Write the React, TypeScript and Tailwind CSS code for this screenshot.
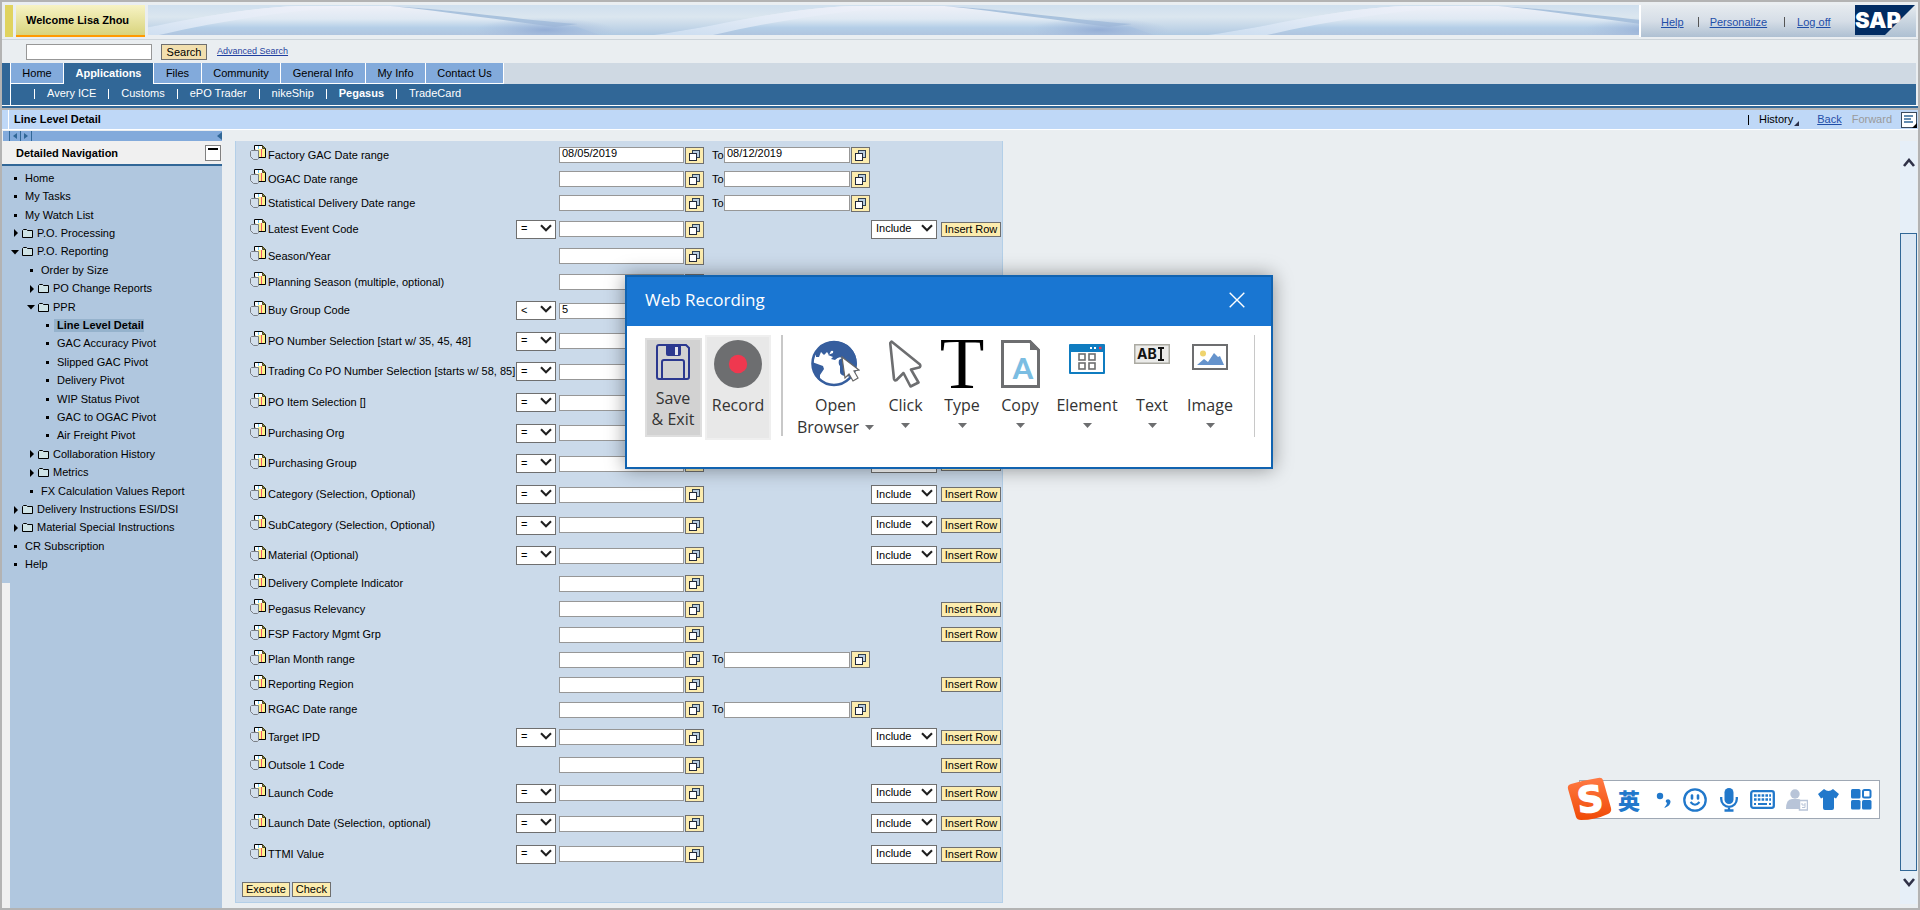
import React from "react";

type Row = {
  label: string;
  height: string;
  op?: string;
  value?: string;
  to?: string;
  include?: boolean;
  insert?: boolean;
};

const H24 = "h-6";
const H25 = "h-[25px]";
const H26 = "h-[26px]";
const H28 = "h-7";
const H30 = "h-[30px]";
const H31 = "h-[31px]";

const rows: Row[] = [
  { label: "Factory GAC Date range", height: H24, value: "08/05/2019", to: "08/12/2019" },
  { label: "OGAC Date range", height: H24, to: "" },
  { label: "Statistical Delivery Date range", height: H24, to: "" },
  { label: "Latest Event Code", height: H28, op: "=", include: true, insert: true },
  { label: "Season/Year", height: H26 },
  { label: "Planning Season (multiple, optional)", height: H26 },
  { label: "Buy Group Code", height: H31, op: "<", value: "5", include: true, insert: true },
  { label: "PO Number Selection [start w/ 35, 45, 48]", height: H30, op: "=", include: true, insert: true },
  { label: "Trading Co PO Number Selection [starts w/ 58, 85]", height: H31, op: "=", include: true, insert: true },
  { label: "PO Item Selection []", height: H31, op: "=", include: true, insert: true },
  { label: "Purchasing Org", height: H30, op: "=", include: true, insert: true },
  { label: "Purchasing Group", height: H31, op: "=", include: true, insert: true },
  { label: "Category (Selection, Optional)", height: H31, op: "=", include: true, insert: true },
  { label: "SubCategory (Selection, Optional)", height: H30, op: "=", include: true, insert: true },
  { label: "Material (Optional)", height: H31, op: "=", include: true, insert: true },
  { label: "Delivery Complete Indicator", height: H25 },
  { label: "Pegasus Relevancy", height: H26, insert: true },
  { label: "FSP Factory Mgmt Grp", height: H25, insert: true },
  { label: "Plan Month range", height: H25, to: "" },
  { label: "Reporting Region", height: H25, insert: true },
  { label: "RGAC Date range", height: H25, to: "" },
  { label: "Target IPD", height: H30, op: "=", include: true, insert: true },
  { label: "Outsole 1 Code", height: H26, insert: true },
  { label: "Launch Code", height: H30, op: "=", include: true, insert: true },
  { label: "Launch Date (Selection, optional)", height: H31, op: "=", include: true, insert: true },
  { label: "TTMI Value", height: H30, op: "=", include: true, insert: true },
];

type Node = { label: string; level: 0 | 1 | 2; kind: "leaf" | "closed" | "open"; current?: boolean };

const nodes: Node[] = [
  { label: "Home", level: 0, kind: "leaf" },
  { label: "My Tasks", level: 0, kind: "leaf" },
  { label: "My Watch List", level: 0, kind: "leaf" },
  { label: "P.O. Processing", level: 0, kind: "closed" },
  { label: "P.O. Reporting", level: 0, kind: "open" },
  { label: "Order by Size", level: 1, kind: "leaf" },
  { label: "PO Change Reports", level: 1, kind: "closed" },
  { label: "PPR", level: 1, kind: "open" },
  { label: "Line Level Detail", level: 2, kind: "leaf", current: true },
  { label: "GAC Accuracy Pivot", level: 2, kind: "leaf" },
  { label: "Slipped GAC Pivot", level: 2, kind: "leaf" },
  { label: "Delivery Pivot", level: 2, kind: "leaf" },
  { label: "WIP Status Pivot", level: 2, kind: "leaf" },
  { label: "GAC to OGAC Pivot", level: 2, kind: "leaf" },
  { label: "Air Freight Pivot", level: 2, kind: "leaf" },
  { label: "Collaboration History", level: 1, kind: "closed" },
  { label: "Metrics", level: 1, kind: "closed" },
  { label: "FX Calculation Values Report", level: 1, kind: "leaf" },
  { label: "Delivery Instructions ESI/DSI", level: 0, kind: "closed" },
  { label: "Material Special Instructions", level: 0, kind: "closed" },
  { label: "CR Subscription", level: 0, kind: "leaf" },
  { label: "Help", level: 0, kind: "leaf" },
];

const levelPad = ["pl-[9px]", "pl-[25px]", "pl-[41px]"];

function Banner() {
  return (
    <svg className="h-full w-full" aria-hidden="true">
      <defs>
        <linearGradient id="sky" x1="0" y1="0" x2="0" y2="1">
          <stop offset="0" stopColor="#cfdfee" />
          <stop offset="0.4" stopColor="#dbe6ef" />
          <stop offset="1" stopColor="#b0c9e2" />
        </linearGradient>
        <linearGradient id="hill" x1="0" y1="0" x2="0" y2="1">
          <stop offset="0" stopColor="#eef0f8" />
          <stop offset="0.45" stopColor="#dfe9f3" />
          <stop offset="0.75" stopColor="#b4cee7" />
          <stop offset="1" stopColor="#b0c5df" />
        </linearGradient>
        <linearGradient id="band" x1="0" y1="1" x2="1" y2="0">
          <stop offset="0" stopColor="#cbddf0" />
          <stop offset="0.5" stopColor="#e3ebf6" />
          <stop offset="1" stopColor="#f0f1f9" />
        </linearGradient>
        <radialGradient id="shade">
          <stop offset="0" stopColor="#8fa9d3" stopOpacity="0.85" />
          <stop offset="1" stopColor="#a5bbdc" stopOpacity="0" />
        </radialGradient>
        <pattern id="wave" x="-48" y="0" width="554" height="30" patternUnits="userSpaceOnUse">
          <rect width="554" height="30" fill="url(#sky)" />
          <path d="M0 30 C60 22 130 3 200 1 H290 C360 5 420 16 475 21 L500 30 Z" fill="url(#hill)" />
          <path d="M0 30 C60 22 130 3 200 1 H270 C200 3 120 16 59 30 Z" fill="url(#band)" />
          <path d="M290 1 C350 4 420 15 478 19 L455 22 C400 15 350 7 290 1Z" fill="#a9c2dd" />
          <ellipse cx="445" cy="25" rx="70" ry="12" fill="url(#shade)" />
        </pattern>
      </defs>
      <rect width="100%" height="100%" fill="url(#wave)" />
    </svg>
  );
}

function DocIcon() {
  return (
    <svg width="17" height="16" viewBox="0 0 17 16" aria-hidden="true" className="mb-1 shrink-0">
      <path d="M4.500 4V.5H12.500L15.500 3.500V12.500H8Z" fill="#fff" stroke="#000" />
      <path d="M8 4H15V12H8Z" fill="#fdf28c" />
      <path d="M12.500 .5V3.500H15.500Z" fill="#8a8440" stroke="#4a4620" />
      <path d="M8.500 1V4" stroke="#6cc7f2" />
      <path d="M11.500 4V12" stroke="#f0566a" />
      <path d="M1.500 5.500H8.500V13.500L7.500 14.500H3.500L.5 11.500V6.500Z" fill="#d3dfec" stroke="#7a7f86" />
    </svg>
  );
}

function PickButton({ label }: { label: string }) {
  return (
    <button type="button" aria-label={label} className="grid h-[17px] w-[19px] shrink-0 place-items-center border border-[#6f6f6f] bg-[#fcecae]">
      <svg width="11" height="13" viewBox="0 0 11 13" aria-hidden="true">
        <rect x="3.500" y="1.500" width="7" height="7" fill="#b9cde0" stroke="#33414f" />
        <rect x=".5" y="4.500" width="7" height="7" fill="#fff" stroke="#222838" />
      </svg>
    </button>
  );
}

function Choice({ value, options, label, width }: { value: string; options: string[]; label: string; width: string }) {
  return (
    <span className={"relative flex h-[19px] " + width}>
      <select aria-label={label} defaultValue={value} className="h-full w-full appearance-none border border-[#6f6f6f] bg-white pb-px pl-1 text-[11px]">
        {options.map((o) => (
          <option key={o}>{o}</option>
        ))}
      </select>
      <svg width="12" height="8" viewBox="0 0 12 8" aria-hidden="true" className="pointer-events-none absolute right-1 top-1">
        <path d="M1 1.200L6 6.200L11 1.200" fill="none" stroke="#1f1f1f" strokeWidth="2.100" />
      </svg>
    </span>
  );
}

function YellowButton({ children, className }: { children: React.ReactNode; className?: string }) {
  return (
    <button type="button" className={"h-[15px] whitespace-nowrap border border-[#6f6f6f] bg-[#fcecae] text-center text-[11px] leading-[13px] " + (className ?? "px-[3px]")}>
      {children}
    </button>
  );
}

function FieldRow({ row, index }: { row: Row; index: number }) {
  const id = "field-" + index;
  return (
    <div className={"grid grid-cols-[266px_43px_153px_159px_70px_60px] items-center pl-[14px] " + row.height}>
      <div className="flex items-center gap-px whitespace-nowrap">
        <DocIcon />
        <label htmlFor={id}>{row.label}</label>
      </div>
      <div>{row.op && <Choice label={row.label + " operator"} value={row.op} options={["=", "<", ">"]} width="w-10" />}</div>
      <div className="flex items-center gap-px">
        <input id={id} defaultValue={row.value} className="h-4 w-[125px] border border-[#979797] bg-white px-0.5 pb-1 text-[11px]" />
        <PickButton label={"Pick " + row.label} />
      </div>
      <div className="flex items-center">
        {row.to !== undefined && (
          <>
            <label htmlFor={id + "-to"} className="w-3">To</label>
            <input id={id + "-to"} defaultValue={row.to} className="mr-px h-4 w-[126px] border border-[#979797] bg-white px-0.5 pb-1 text-[11px]" />
            <PickButton label={"Pick end of " + row.label} />
          </>
        )}
      </div>
      <div>{row.include && <Choice label={row.label + " mode"} value="Include" options={["Include", "Exclude"]} width="w-[66px]" />}</div>
      {row.insert && <YellowButton className="w-[60px]">Insert Row</YellowButton>}
    </div>
  );
}

function Marker({ kind }: { kind: Node["kind"] }) {
  if (kind === "leaf") return <span className="ml-[3px] mr-2 h-[3px] w-[3px] bg-black" />;
  return (
    <span className="flex items-center gap-[3px]">
      <svg width="8" height="8" viewBox="0 0 8 8" aria-hidden="true">
        {kind === "closed" ? <path d="M3 0L7 4L3 8Z" /> : <path d="M0 2H8L4 6.500Z" />}
      </svg>
      <svg width="11" height="9" viewBox="0 0 11 9" aria-hidden="true" className="mr-1">
        <path d="M.5 8.500V1.500L1.500 .5H4.500L5.500 1.500H10.500V8.500Z" fill="#cfe3e6" stroke="#000" />
      </svg>
    </span>
  );
}

function Sidebar() {
  return (
    <aside className="flex w-[220px] shrink-0 flex-col">
      <div className="ml-px flex h-[10px] items-center bg-[#82aadb] pl-[6px]">
        <span className="flex h-full items-center border-l border-[#316797] px-[3px]">
          <svg width="4" height="6" viewBox="0 0 4 6" aria-hidden="true"><path d="M4 0V6L0 3Z" fill="#316797" /></svg>
        </span>
        <span className="flex h-full items-center border-x border-[#316797] px-[3px]">
          <svg width="4" height="6" viewBox="0 0 4 6" aria-hidden="true"><path d="M0 0V6L4 3Z" fill="#316797" /></svg>
        </span>
        <svg width="5" height="8" viewBox="0 0 5 8" aria-hidden="true" className="ml-auto"><path d="M5 0V8L0 4Z" fill="#316797" /></svg>
      </div>
      <div className="flex h-[25px] items-center justify-between border-b-2 border-[#316797] bg-[#f0f0f0] pl-[14px] pr-px">
        <h2 className="pt-px font-bold">Detailed Navigation</h2>
        <button type="button" aria-label="Collapse" className="flex h-4 w-4 items-start border border-[#808080] bg-white px-[2px] pt-[2px]">
          <span className="h-[2px] w-full bg-black" />
        </button>
      </div>
      <div className="flex flex-1 flex-col bg-[#b0c7df]">
        <ul className="flex h-[409px] flex-col pb-px pt-[3px]">
          {nodes.map((n) => (
            <li key={n.label} className={"flex flex-1 items-center " + levelPad[n.level]}>
              <Marker kind={n.kind} />
              <a href="#" className={n.current ? "-ml-[3px] bg-[#95b2cc] pl-[3px] font-bold leading-[13px]" : "leading-[13px]"}>
                {n.label}
              </a>
            </li>
          ))}
        </ul>
        <div className="mt-2 w-2 flex-1 bg-[#f0f0f0]" />
      </div>
    </aside>
  );
}

function Caret() {
  return (
    <svg width="9" height="5" viewBox="0 0 9 5" aria-hidden="true"><path d="M0 0H9L4.500 5Z" fill="#6d6e70" /></svg>
  );
}

function Tool({ label, width, children }: { label: string; width: string; children: React.ReactNode }) {
  return (
    <button type="button" className={"flex flex-col items-center pt-[5px] " + width}>
      <span className="flex h-[54px] justify-center">{children}</span>
      <span className="leading-[22px]">{label}</span>
      <span className="mt-[7px]"><Caret /></span>
    </button>
  );
}

function WebRecording() {
  return (
    <section role="dialog" aria-label="Web Recording" className="absolute left-[623px] top-[273px] z-10 h-[194px] w-[648px] border-2 border-[#1163b0] bg-white font-['Open_Sans','Noto_Sans',sans-serif] text-base text-[#333] shadow-[0_0_18px_rgba(0,0,0,0.4)]">
      <header className="flex h-[49px] items-center justify-between bg-[#1976d2] pb-[3px] pl-[18px] pr-[26px] text-white">
        <h2 className="text-[17px]">Web Recording</h2>
        <button type="button" aria-label="Close">
          <svg width="16" height="16" viewBox="0 0 16 16" aria-hidden="true"><path d="M.7 .7L15.300 15.300M15.300 .7L.7 15.300" stroke="#fff" strokeWidth="1.400" /></svg>
        </button>
      </header>
      <div className="flex pl-[18px] pt-[9px]">
        <button type="button" className="mr-[3px] mt-[3px] flex h-[99px] w-[57px] flex-col items-center border-2 border-[#dedede] bg-[#d2d2d2] pr-px pt-1 leading-[21px]">
          <svg width="34" height="36" viewBox="0 0 34 36" aria-hidden="true" className="mb-2 shrink-0">
            <path d="M3 1H30L33 4V33Q33 35 31 35H3Q1 35 1 33V3Q1 1 3 1Z" fill="none" stroke="#2b388f" strokeWidth="2" />
            <path d="M10 1H25V10Q25 12 23 12H12Q10 12 10 10Z" fill="#2b388f" />
            <rect x="19" y="3" width="3" height="8" fill="#e3e5ef" />
            <path d="M6 35V18Q6 16 8 16H26Q28 16 28 18V35" fill="none" stroke="#2b388f" strokeWidth="2" />
          </svg>
          <span>Save</span>
          <span className="whitespace-nowrap">&amp; Exit</span>
        </button>
        <button type="button" className="flex h-[105px] w-[66px] flex-col items-center border-2 border-[#efefef] bg-[#e8e8e8] pt-[3px]">
          <svg width="48" height="48" viewBox="0 0 48 48" aria-hidden="true" className="mb-[6px]">
            <circle cx="24" cy="24" r="24" fill="#6d6e70" />
            <circle cx="24" cy="24" r="9.200" fill="#ef384f" />
          </svg>
          <span className="leading-[22px]">Record</span>
        </button>
        <div className="ml-[10px] mr-[15px] h-[101px] w-[2px] bg-[#c8c8c8]" />
        <button type="button" className="flex w-[75px] flex-col items-center pt-[5px] leading-[22px]">
          <svg width="49" height="54" viewBox="0 0 49 54" aria-hidden="true">
            <circle cx="23" cy="23.500" r="21.500" fill="#fff" stroke="#365e9e" strokeWidth="2.600" />
            <path d="M1 22L12 26L13 29L9 35L9 41Q1 33 1 22Z" fill="#365e9e" />
            <path d="M5 13Q12 1 24 1Q45 4 46 24Q45 34 41 37L34 36Q29 35 29 32V26Q27 24 28 20L31 18Q28 16 24 20L20 19L22 17L17 15L22 13Q23 10 20 11L18 15L16 12L13 15L10 12L8 17L5 17Z" fill="#365e9e" />
            <path d="M31 17L48 30L43 31L47 38L42 41L38 34L34 38Z" fill="#fff" stroke="#666" strokeWidth="1.200" />
          </svg>
          <span>Open</span>
          <span className="flex items-center gap-[6px]">Browser <Caret /></span>
        </button>
        <div className="w-1" />
        <Tool label="Click" width="w-[57px]">
          <svg width="34" height="48" viewBox="0 0 34 48" aria-hidden="true">
            <path d="M2.500 1.500L31 24.500Q32 26.500 30 27.500L22 29.500L29.500 42.500L21.500 46.500L14.500 33L7.500 40Q5.500 41 5 39L1.200 3Z" fill="#fff" stroke="#6d6e70" strokeWidth="2.600" strokeLinejoin="round" />
          </svg>
        </Tool>
        <Tool label="Type" width="w-[56px]">
          <svg width="46" height="50" viewBox="0 0 46 50" aria-hidden="true">
            <text x="23" y="48" textAnchor="middle" fontFamily="'Liberation Serif', serif" fontSize="73" fill="#000">T</text>
          </svg>
        </Tool>
        <Tool label="Copy" width="w-[60px]">
          <svg width="39" height="48" viewBox="0 0 39 48" aria-hidden="true">
            <path d="M1.500 1.500H29L37.500 10V46.500H1.500Z" fill="#fff" stroke="#6d6e70" strokeWidth="3" />
            <path d="M29 0L39 10H29Z" fill="#6d6e70" />
            <text x="22" y="39" textAnchor="middle" fontFamily="Lato, sans-serif" fontWeight="900" fontSize="29" fill="#7bbde2">A</text>
          </svg>
        </Tool>
        <Tool label="Element" width="w-[74px]">
          <svg width="36" height="34" viewBox="0 -4 36 34" aria-hidden="true">
            <rect width="36" height="30" rx="1" fill="#0f7cc0" />
            <rect x="2" y="8" width="32" height="20" fill="#fff" />
            <path d="M21 4h2M25 4h2" stroke="#fff" strokeWidth="2" />
            <path d="M30 4h2.500" stroke="#ef384f" strokeWidth="2.500" />
            <g fill="#fff" stroke="#6d6e70" strokeWidth="1.600">
              <rect x="10" y="10" width="6" height="6" />
              <rect x="20" y="10" width="6" height="6" />
              <rect x="10" y="19" width="6" height="6" />
              <rect x="20" y="19" width="6" height="6" />
            </g>
          </svg>
        </Tool>
        <Tool label="Text" width="w-[56px]">
          <svg width="36" height="24" viewBox="0 -4 36 24" aria-hidden="true">
            <rect x=".75" y=".75" width="34.500" height="18.500" fill="#ebebe9" stroke="#abaaa2" strokeWidth="1.500" />
            <text x="3" y="15" fontFamily="Inter, sans-serif" fontWeight="700" fontSize="14" fill="#111">AB</text>
            <path d="M24 4H26.500L27 5L27.500 4H30M27 5V15M24 16H26.500L27 15L27.500 16H30" fill="none" stroke="#111" strokeWidth="1.900" />
          </svg>
        </Tool>
        <Tool label="Image" width="w-[60px]">
          <svg width="36" height="30" viewBox="0 -4 36 30" aria-hidden="true">
            <rect x="1" y="1" width="34" height="24" fill="#fff" stroke="#6d6e70" strokeWidth="2" />
            <circle cx="11" cy="9.500" r="3" fill="#efd46e" />
            <path d="M5 21L12 15L16 18L22 9L26 13L28 12L32 21Z" fill="#6593cc" />
          </svg>
        </Tool>
        <div className="ml-[14px] h-[102px] w-px bg-[#c8c8c8]" />
      </div>
    </section>
  );
}

function InputToolbar() {
  return (
    <div role="toolbar" aria-label="Input method" className="absolute bottom-[89px] right-[38px] z-10 flex h-[39px] w-[301px] items-center border border-[#9fa8b4] bg-white pl-[38px] text-[#2178cb]">
      <svg width="46" height="44" viewBox="0 0 46 44" aria-label="Sogou" className="absolute -left-[13px] -top-[4px]">
        <defs>
          <linearGradient id="sg" x1="0" y1="0" x2="0" y2="1">
            <stop offset="0" stopColor="#ff7a45" />
            <stop offset="1" stopColor="#f04a06" />
          </linearGradient>
        </defs>
        <path d="M4 7Q18 3 31 1Q35 0 36 3L44 31Q45 35 41 37Q28 43 14 43Q10 43 9 40L1 12Q0 8 4 7Z" fill="url(#sg)" />
        <text x="23" y="35" textAnchor="middle" transform="rotate(-6 23 22)" fontFamily="'DejaVu Sans', sans-serif" fontWeight="700" fontSize="36" fill="#fff" stroke="#fff" strokeWidth="1.500">S</text>
      </svg>
      <button type="button" className="w-[22px] pb-[2px] font-['Noto_Sans_CJK_SC',sans-serif] text-[22px] font-black leading-6">英</button>
      <svg width="16" height="16" viewBox="0 0 16 16" aria-hidden="true" className="ml-4">
        <circle cx="4" cy="4" r="3.200" fill="currentColor" />
        <path d="M10 8Q13 6 14.500 9Q15 14 8 16Q11 13 11 11Q9 10 10 8Z" fill="currentColor" />
      </svg>
      <svg width="24" height="24" viewBox="0 0 24 24" aria-hidden="true" className="ml-[11px]">
        <circle cx="12" cy="12" r="10.700" fill="none" stroke="currentColor" strokeWidth="2.300" />
        <path d="M9 7.500V10.500M15 7.500V10.500" stroke="currentColor" strokeWidth="2.600" strokeLinecap="round" />
        <path d="M7.500 14Q12 19.500 16.500 14" fill="none" stroke="currentColor" strokeWidth="2" />
      </svg>
      <svg width="18" height="24" viewBox="0 0 18 24" aria-hidden="true" className="ml-[13px]">
        <rect x="4.500" y="0" width="9" height="16" rx="4.500" fill="currentColor" />
        <path d="M1.200 9V11A7.800 7.800 0 0 0 16.800 11V9M9 18V22M4.500 22.500H13.500" fill="none" stroke="currentColor" strokeWidth="2.300" />
      </svg>
      <svg width="25" height="19" viewBox="0 0 25 19" aria-hidden="true" className="ml-3">
        <rect x="1.200" y="1.200" width="22.600" height="16.600" rx="2" fill="none" stroke="currentColor" strokeWidth="2.300" />
        <path d="M4 5.500H21M4 9.500H21" stroke="currentColor" strokeWidth="2.600" strokeDasharray="2.600 1.200" />
        <path d="M4 14H6M8 14H17M19 14H21" stroke="currentColor" strokeWidth="2.200" />
      </svg>
      <svg width="22" height="22" viewBox="0 0 22 22" aria-hidden="true" className="ml-[11px] text-[#b8c4d8]">
        <circle cx="9" cy="5" r="4.700" fill="currentColor" />
        <path d="M0 20Q0 10 6 10H12Q15 10 15 13V20Z" fill="currentColor" />
        <rect x="13.500" y="11.500" width="8" height="9.500" fill="#fff" stroke="currentColor" strokeWidth="1.500" />
        <path d="M16 14V16H19M19 14V18.500H16" fill="none" stroke="currentColor" />
      </svg>
      <svg width="21" height="21" viewBox="0 0 21 21" aria-hidden="true" className="ml-[10px]">
        <path d="M6 0Q10.500 4 15 0L21 5L18 9.500L16 8.500V19Q16 21 14 21H7Q5 21 5 19V8.500L3 9.500L0 5Z" fill="currentColor" />
      </svg>
      <svg width="21" height="21" viewBox="0 0 21 21" aria-hidden="true" className="ml-3">
        <rect width="9.500" height="9.500" rx="1.500" fill="currentColor" />
        <rect y="11" width="9.500" height="9.500" rx="1.500" fill="currentColor" />
        <rect x="11" y="11" width="9.500" height="9.500" rx="1.500" fill="currentColor" />
        <rect x="12" y="1" width="7.500" height="7.500" rx="1.500" fill="none" stroke="currentColor" strokeWidth="2" />
      </svg>
    </div>
  );
}

const tabs = [
  { label: "Home", width: "w-[53px]" },
  { label: "Applications", width: "w-[90px]", active: true },
  { label: "Files", width: "w-12" },
  { label: "Community", width: "w-[79px]" },
  { label: "General Info", width: "w-[85px]" },
  { label: "My Info", width: "w-[60px]" },
  { label: "Contact Us", width: "w-[78px]" },
];

const subTabs = ["Avery ICE", "Customs", "ePO Trader", "nikeShip", "Pegasus", "TradeCard"];

export default function App() {
  return (
    <div className="relative flex min-h-screen flex-col border-2 border-[#b3b3b3] bg-[#eaeef1] font-['Liberation_Sans',Arial,sans-serif] text-[11px] leading-[13px] text-black">
      <header className="flex h-[38px] border-b border-[#cdd4d9] pl-[3px] pr-[2px] pt-[3px]">
        <div className="h-8 w-2 bg-[#e0d35f]" />
        <div className="ml-[3px] flex h-8 w-[129px] items-center border-b-2 border-[#ff9a00] bg-linear-to-b from-[#f7f3c4] to-[#d9d47c] pl-[10px] pt-px font-bold">
          Welcome Lisa Zhou
        </div>
        <div className="ml-[3px] h-[30px] min-w-0 flex-1"><Banner /></div>
        <nav className="flex h-8 w-[216px] shrink-0 items-center border-l-2 border-white bg-linear-to-b from-[#e6ebef] via-[#d6dee7] to-[#aec0d2] pl-[20px] pt-[2px] text-[#1f4ea8]">
          <a href="#" className="underline">Help</a>
          <span className="ml-[14px] mr-[11px] h-[10px] w-px bg-[#555]" />
          <a href="#" className="underline">Personalize</a>
          <span className="ml-[17px] mr-[12px] h-[10px] w-px bg-[#555]" />
          <a href="#" className="underline">Log off</a>
        </nav>
        <div className="h-8 w-[61px] shrink-0 bg-linear-to-b from-[#e6ebef] to-[#aec0d2]">
          <svg width="60" height="30" viewBox="0 0 60 30" role="img" aria-label="SAP">
            <path d="M0 0H60L30 30H0Z" fill="#012c63" />
            <text x="0" y="23" fontFamily="Inter, 'Liberation Sans', sans-serif" fontWeight="900" fontSize="22" fill="#fff">SAP</text>
          </svg>
        </div>
      </header>

      <div className="flex h-[23px] items-center pl-6">
        <input aria-label="Search text" className="h-4 w-[126px] border border-[#979797] bg-white px-1" />
        <button type="button" className="ml-[9px] h-4 w-[46px] border border-[#6f6f6f] bg-[#f2dfae] leading-[14px]">Search</button>
        <a href="#" className="ml-[10px] text-[9px] text-[#1f3f9f] underline">Advanced Search</a>
      </div>

      <div className="mr-[2px] flex">
        <div className="w-2 bg-[#316797]" />
        <div className="min-w-0 flex-1 border-l border-white">
          <nav className="flex h-[21px] bg-[#cfd9e3]">
            {tabs.map((t) => (
              <a
                key={t.label}
                href="#"
                className={
                  "flex items-center justify-center border-r border-white " +
                  t.width +
                  (t.active ? " bg-[#316797] font-bold text-white" : " border-b bg-[#82aadb]")
                }
              >
                {t.label}
              </a>
            ))}
          </nav>
          <nav className="flex h-[21px] items-center bg-[#316797] pb-[3px] pl-[11px] text-white">
            {subTabs.map((t) => (
              <React.Fragment key={t}>
                <span className="mx-3 mt-[2px] h-[10px] w-px bg-white" />
                <a href="#" className={t === "Pegasus" ? "font-bold" : ""}>{t}</a>
              </React.Fragment>
            ))}
          </nav>
        </div>
      </div>
      <div className="h-[5px] border-b-2 border-t border-b-[#b3b3b3] border-t-white bg-[#316797]" />

      <div className="flex h-[20px] border-b border-white bg-[#bfd8f7] pl-[6px]">
        <div className="flex flex-1 items-center border-l border-white pl-[5px]">
          <h1 className="font-bold">Line Level Detail</h1>
          <span className="ml-auto h-[10px] w-px bg-black" />
          <button type="button" className="ml-[10px] flex items-end gap-px">
            History
            <svg width="5" height="5" viewBox="0 0 5 5" aria-hidden="true"><path d="M5 0V5H0Z" fill="#2a2f4a" /></svg>
          </button>
          <a href="#" className="ml-[18px] text-[#1f4ea8] underline">Back</a>
          <span className="ml-[10px] mr-[9px] text-[#9a9a9a]">Forward</span>
          <button type="button" aria-label="Page options" className="mr-px">
            <svg width="16" height="16" viewBox="0 0 16 16" aria-hidden="true">
              <rect x=".5" y=".5" width="15" height="15" fill="#fff" stroke="#3a4a5c" />
              <path d="M3 4H12M3 7H10M3 10H12" stroke="#316797" strokeWidth="1.300" />
              <path d="M16 11V16H11Z" fill="#000" />
            </svg>
          </button>
        </div>
      </div>

      <div className="flex min-h-0 flex-1 pt-px">
        <Sidebar />
        <main className="mb-[5px] ml-[13px] mt-[10px] flex w-[768px] shrink-0 flex-col border-x border-b border-[#b3cfe8] bg-[#cbdaea] pt-[2px]">
          {rows.map((r, i) => (
            <FieldRow key={r.label} row={r} index={i} />
          ))}
          <div className="flex gap-[2px] pl-[6px] pt-[13px]">
            <YellowButton>Execute</YellowButton>
            <YellowButton>Check</YellowButton>
          </div>
        </main>
        <div className="mb-1 ml-auto mr-px mt-[10px] flex w-[17px] flex-col items-center bg-[#e6eff8] pt-[17px]">
          <svg width="12" height="9" viewBox="0 0 12 9" aria-hidden="true"><path d="M1 8L6 2L11 8" fill="none" stroke="#2f3148" strokeWidth="2.600" /></svg>
          <div className="mt-[66px] w-full flex-1 border border-[#316797] bg-[#dbe7f4]" />
          <svg width="12" height="9" viewBox="0 0 12 9" aria-hidden="true" className="mb-[17px] mt-[7px]"><path d="M1 1L6 7L11 1" fill="none" stroke="#2f3148" strokeWidth="2.600" /></svg>
        </div>
      </div>

      <WebRecording />
      <InputToolbar />
    </div>
  );
}
